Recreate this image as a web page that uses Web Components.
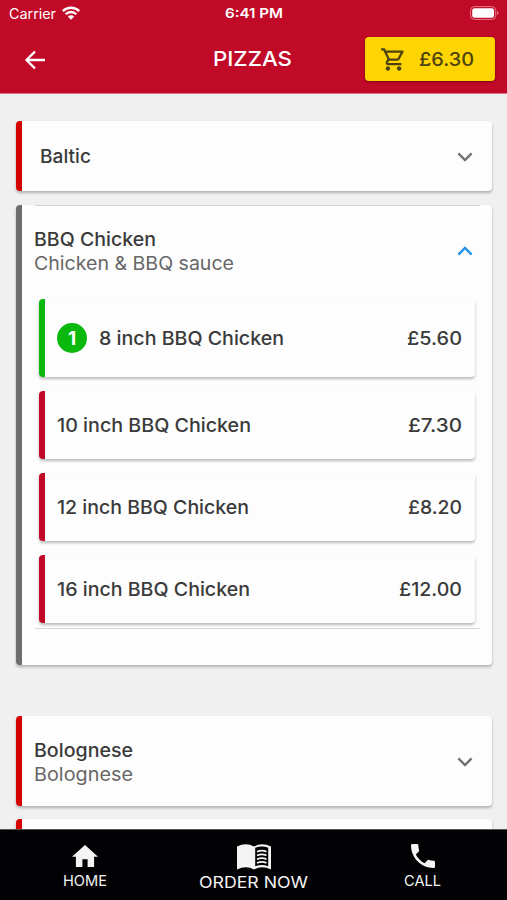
<!DOCTYPE html>
<html lang="en"><head><meta charset="utf-8"><title>Pizzas</title>
<style>
html,body{margin:0;height:100%;overflow:hidden;background:#f0f0f0}
</style></head><body>
<pizza-app></pizza-app>
<script>
const define = (name, css, html, setup) => customElements.define(name, class extends HTMLElement {
  connectedCallback() {
    if (this.shadowRoot) return;
    const root = this.attachShadow({mode: 'open'});
    root.innerHTML = `<style>*{box-sizing:border-box}${css}</style>${html}`;
    if (setup) setup(this, root);
  }
});

// A single line of text stretched to the width it is given.
define('fit-text', `:host{display:block;flex:none;white-space:nowrap;line-height:1.3}
span{display:inline-block;transform-origin:0 50%}`, '<span></span>', (el, root) => {
  const s = root.querySelector('span');
  s.textContent = el.getAttribute('text');
  const w = +el.getAttribute('w');
  el.style.width = w + 'px';
  s.style.transform = `scaleX(${w / s.getBoundingClientRect().width})`;
});

const icons = {
  back: ['0 0 24 24', '<path d="M22 12H4M12 3.5 3.5 12l8.5 8.5" fill="none" stroke="currentColor" stroke-width="2.3"/>'],
  cart: ['0 0 24 24', '<path fill="currentColor" d="M15.55 13c.75 0 1.41-.41 1.75-1.03l3.58-6.49A.996.996 0 0 0 20.01 4H5.21l-.94-2H1v2h2l3.6 7.59-1.35 2.44C4.52 15.37 5.48 17 7 17h12v-2H7l1.1-2h7.45zM6.16 6h12.15l-2.76 5H8.53L6.16 6zM7 18c-1.1 0-1.99.9-1.99 2S5.9 22 7 22s2-.9 2-2-.9-2-2-2zm10 0c-1.1 0-1.99.9-1.99 2s.89 2 1.99 2 2-.9 2-2-.9-2-2-2z"/>'],
  down: ['0 0 16 10', '<path d="M1.4 1.4 8 8l6.6-6.6" fill="none" stroke="currentColor" stroke-width="2.3"/>'],
  up: ['0 0 16 10', '<path d="M1.4 8.6 8 2l6.6 6.6" fill="none" stroke="currentColor" stroke-width="2.3"/>'],
  home: ['2 3 20 17', '<path fill="currentColor" d="M10 20v-6h4v6h5v-8h3L12 3 2 12h3v8z"/>'],
  phone: ['3 3 18 18', '<path fill="currentColor" d="M6.62 10.79c1.44 2.83 3.76 5.14 6.59 6.59l2.2-2.2c.27-.27.67-.36 1.02-.24 1.12.37 2.33.57 3.57.57.55 0 1 .45 1 1V20c0 .55-.45 1-1 1-9.39 0-17-7.61-17-17 0-.55.45-1 1-1h3.5c.55 0 1 .45 1 1 0 1.25.2 2.45.57 3.57.11.35.03.74-.25 1.02l-2.2 2.2z"/>'],
  book: ['0 0 34 27', '<path fill="currentColor" d="M0 2.5Q9-1.8 17 2.5 25-1.8 34 2.5V26.5Q25 22 17 26.5 9 22 0 26.5z"/><path d="M18.2 4Q25 1 31.2 4V23Q25 20.5 18.2 23z" fill="#000"/><path d="M20 8q5-2.4 9.5 0M20 11.9q5-2.4 9.5 0M20 15.8q5-2.4 9.5 0M20 19.7q5-2.4 9.5 0" fill="none" stroke="currentColor" stroke-width="1.9"/>'],
  wifi: ['0 0 18 14', '<g fill="none" stroke="currentColor" stroke-width="2.3"><path d="M.8 5.1a11.7 11.7 0 0 1 16.4 0M3.7 8.2a7.5 7.5 0 0 1 10.6 0"/></g><path fill="currentColor" d="M5.8 10.6a4.6 4.6 0 0 1 6.4 0L9 13.8z"/>'],
  battery: ['0 0 30 14', '<rect x=".6" y=".6" width="26" height="12.8" rx="3.8" fill="none" stroke="#e8798a" stroke-width="1"/><rect x="2.3" y="2.2" width="22.6" height="9.6" rx="2.4" fill="#fff"/><path d="M28 4.8q3 2.2 0 4.4z" fill="#e8798a"/>']
};
define('ui-icon', ':host{display:block;flex:none}svg{display:block;width:100%;height:100%}', '', (el, root) => {
  const [box, art] = icons[el.getAttribute('name')];
  root.innerHTML += `<svg viewBox="${box}" preserveAspectRatio="none">${art}</svg>`;
});

define('status-bar', `:host{display:grid;grid-template-columns:1fr auto 1fr;align-items:center;height:27px;padding:0 8px 0 9px;font-size:14px;font-weight:400}
div{display:flex;align-items:center;gap:6px}
fit-text{margin-top:1px}
ui-icon[name=wifi]{width:18px;height:14px;margin-top:-1px}ui-icon[name=battery]{width:29px;height:14px;justify-self:end;margin-top:-1px}
.time{font-weight:600;font-size:13.5px;margin-left:-1px}`,
`<div><fit-text text="Carrier" w="47"></fit-text><ui-icon name="wifi"></ui-icon></div>
<fit-text class="time" text="6:41 PM" w="58"></fit-text><ui-icon name="battery"></ui-icon>`);

define('cart-button', `:host{display:flex;align-items:center;width:130px;height:44px;padding:0 21px 0 15px;justify-content:space-between;border-radius:4px;background:#fed500;color:#4d4210;box-shadow:0 1px 3px #0005;font-size:18.5px}
fit-text{padding-top:1px}
ui-icon{width:27px;height:27px;margin-top:1px}`,
`<ui-icon name="cart"></ui-icon><fit-text text="£6.30" w="55"></fit-text>`);

define('app-header', `:host{display:block;height:94px;background:#c10a27;color:#fff;border-bottom:1px solid #df7184}
nav{display:grid;grid-template-columns:1fr auto 1fr;align-items:center;height:64px;padding:0 12px 0 23px}
ui-icon{width:24px;height:24px;margin-top:1px}cart-button{justify-self:end}
.title{font-size:20.5px;margin-left:-13px;padding-top:1px}`,
`<status-bar></status-bar><nav><ui-icon name="back"></ui-icon><fit-text class="title" text="PIZZAS" w="79"></fit-text><cart-button></cart-button></nav>`);

define('menu-card', `:host{display:block;height:var(--h);border-left:6px solid var(--edge,#d50000);border-radius:4px;background:#fdfdfd;box-shadow:0 2px 3px #0004}
header{display:flex;align-items:center;justify-content:space-between;height:var(--head,100%);padding:0 19px 0 var(--inset,12px)}
:host([open]) header{background:linear-gradient(#d4d4d4,#d4d4d4) 13px 0/calc(100% - 25px) 1px no-repeat}
ui-icon{width:16px;height:10px;color:#707070;margin-top:1px}:host([open]) ui-icon{color:#2090e8}
.sub{color:#666;font-weight:400}
div{padding-top:var(--drop,2px)}
fit-text{height:24.5px;line-height:24.5px}`, '<header><div></div></header><slot></slot>', (el, root) => {
  const div = root.querySelector('div');
  if (!el.hasAttribute('name')) return;
  div.innerHTML = `<fit-text text="${el.getAttribute('name')}" w="${el.getAttribute('w')}"></fit-text>` +
    (el.hasAttribute('sub') ? `<fit-text class="sub" text="${el.getAttribute('sub')}" w="${el.getAttribute('subw')}"></fit-text>` : '');
  root.querySelector('header').insertAdjacentHTML('beforeend', `<ui-icon name="${el.hasAttribute('open') ? 'up' : 'down'}"></ui-icon>`);
});

define('size-row', `:host{display:flex;align-items:center;justify-content:space-between;height:68px;padding:0 13px 0 12px;border-left:6px solid #c10a27;border-radius:4px;background:#fdfdfd;box-shadow:0 2px 3px #0004}
:host([count]){height:78px;border-color:#0ab80e}
div{display:flex;align-items:center;gap:12px}
b{display:grid;place-items:center;width:30px;height:30px;border-radius:50%;background:#0ab80e;color:#fff;font-size:19px}`, '<div></div>', (el, root) => {
  const a = n => el.getAttribute(n);
  root.querySelector('div').innerHTML = (a('count') ? `<b>${a('count')}</b>` : '') + `<fit-text text="${a('name')}" w="${a('w')}"></fit-text>`;
  root.querySelector('div').insertAdjacentHTML('afterend', `<fit-text text="${a('price')}" w="${a('pw')}"></fit-text>`);
});

define('size-list', `:host{display:flex;flex-direction:column;gap:14px;margin:0 12px 0 13px;padding:4px 5px 5px 4px;border-bottom:1px solid #d8d8d8}`, '<slot></slot>');

define('tab-item', `:host{display:flex;flex-direction:column;align-items:center;font-size:14px;font-weight:400;color:#f4f4f4}
fit-text{height:19px;line-height:19px}`, '<slot></slot><div></div>', (el, root) => {
  root.querySelector('div').innerHTML = `<fit-text text="${el.getAttribute('label')}" w="${el.getAttribute('w')}"></fit-text>`;
});
define('tab-bar', `:host{display:grid;grid-template-columns:repeat(3,1fr);height:71px;background:#020103;border-top:1px solid #555}
ui-icon[name=home]{width:26px;height:22px;margin:15px 0 4px}
ui-icon[name=book]{width:34px;height:26px;margin:14px 0 3px}
ui-icon[name=phone]{width:24px;height:24px;margin:14px 0 3px}
.mid{font-size:16px}`,
`<tab-item label="HOME" w="44"><ui-icon name="home"></ui-icon></tab-item>
<tab-item class="mid" label="ORDER NOW" w="109"><ui-icon name="book"></ui-icon></tab-item>
<tab-item label="CALL" w="37"><ui-icon name="phone"></ui-icon></tab-item>`);

define('pizza-app', `:host{display:flex;flex-direction:column;width:507px;height:900px;overflow:hidden;background:#f0f0f0;font:450 18.5px Inter,"Open Sans",sans-serif;color:#3a3a3a}
main{flex:1;min-height:0;overflow:hidden;padding:27px 15px 0 16px;display:flex;flex-direction:column;gap:14px}
menu-card{flex:none}
.a{--h:70px;--inset:18px;--drop:0px}.b{--h:460px;--head:90px;--edge:#6d6d6d}
.c{--h:90px;margin-top:37px;margin-bottom:-1px}`,
`<app-header></app-header><main>
<menu-card class="a" name="Baltic" w="51"></menu-card>
<menu-card class="b" open name="BBQ Chicken" w="122" sub="Chicken &amp; BBQ sauce" subw="200">
<size-list>
<size-row count="1" name="8 inch BBQ Chicken" w="185" price="£5.60" pw="55"></size-row>
<size-row name="10 inch BBQ Chicken" w="194" price="£7.30" pw="54"></size-row>
<size-row name="12 inch BBQ Chicken" w="192" price="£8.20" pw="54"></size-row>
<size-row name="16 inch BBQ Chicken" w="193" price="£12.00" pw="63"></size-row>
</size-list></menu-card>
<menu-card class="c" name="Bolognese" w="99" sub="Bolognese" subw="99"></menu-card>
<menu-card class="a"></menu-card>
</main><tab-bar></tab-bar>`);
</script></body></html>
